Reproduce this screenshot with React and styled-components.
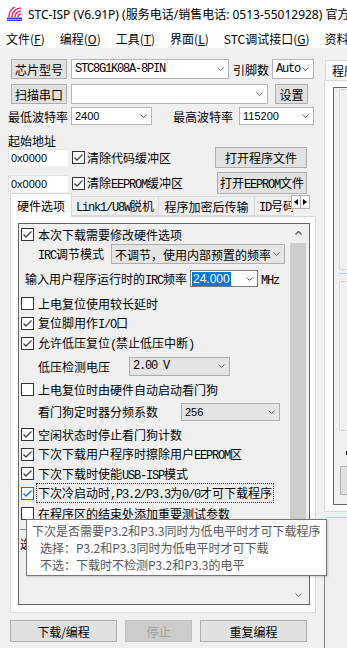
import React from 'react';
import styled, { createGlobalStyle } from 'styled-components';

const Global = createGlobalStyle`
  html, body { margin: 0; padding: 0; background: #f0f0f0; }
  body { font-family: "Noto Sans CJK SC", "Noto Sans", sans-serif; font-size: 12px; color: #000; }
  * { box-sizing: border-box; }
`;

const Window = styled.div`
  position: relative;
  width: 347px;
  height: 648px;
  overflow: hidden;
  background: #f0f0f0;
  display: flex;
  flex-direction: column;
`;

const TitleBar = styled.div`
  height: 28px;
  flex: none;
  background: #fff;
  display: flex;
  align-items: center;
  padding-left: 7px;
  gap: 5px;
  font-family: "Noto Sans", "Noto Sans CJK SC", sans-serif;
  font-size: 12px;
  white-space: nowrap;
`;

const MenuBar = styled.div`
  height: 20px;
  flex: none;
  background: #fff;
  display: flex;
  align-items: center;
  padding-left: 6px;
  gap: 15px;
  white-space: nowrap;
  font-size: 12px;
`;

const MenuItem = styled.span`
  u { text-decoration: underline; text-underline-offset: 1px; }
`;

const Body = styled.div`
  flex: 1;
  display: flex;
  min-height: 0;
`;

const LeftPane = styled.div`
  width: 318px;
  flex: none;
  padding: 11px 0 0 8px;
  display: flex;
  flex-direction: column;
`;

const Row = styled.div`
  display: flex;
  align-items: center;
  flex: none;
  height: ${p => p.$h || 20}px;
  margin-top: ${p => p.$mt || 0}px;
  margin-left: ${p => p.$ml || 0}px;
  padding-left: ${p => p.$pl || 0}px;
  gap: ${p => p.$gap ?? 4}px;
  width: ${p => (p.$w ? `${p.$w}px` : 'auto')};
  white-space: nowrap;
`;

const Button = styled.button`
  width: ${p => p.$w}px;
  height: ${p => p.$h || 20}px;
  flex: none;
  margin: 0;
  margin-left: ${p => (p.$auto ? 'auto' : `${p.$ml || 0}px`)};
  padding: 0;
  background: ${p => (p.$disabled ? '#cccccc' : '#e1e1e1')};
  border: 1px solid ${p => (p.$disabled ? '#bfbfbf' : '#adadad')};
  color: ${p => (p.$disabled ? '#a0a0a0' : '#000')};
  display: flex;
  align-items: center;
  justify-content: center;
  font-family: "Noto Sans CJK SC", sans-serif;
  font-size: 12px;
  white-space: nowrap;
`;

const Combo = styled.div`
  width: ${p => p.$w}px;
  height: ${p => p.$h || 20}px;
  flex: none;
  background: ${p => (p.$flat ? '#e5e5e5' : '#fff')};
  border: 1px solid ${p => (p.$flat ? '#adadad' : '#b4b4b4')};
  display: flex;
  align-items: center;
  justify-content: space-between;
  padding: 0 4px 0 3px;
  white-space: nowrap;
  overflow: hidden;
  svg { flex: none; }
`;

const Label = styled.span`
  flex: none;
  width: ${p => (p.$w ? `${p.$w}px` : 'auto')};
  margin-left: ${p => p.$ml || 0}px;
  font-size: 12px;
  white-space: nowrap;
`;

const M = styled.span`
  font-family: "Liberation Mono", monospace;
  font-size: 12px;
  letter-spacing: -1.2px;
`;

const Num = styled.span`
  font-family: "Liberation Sans", sans-serif;
  font-size: 11px;
`;

const TextInput = styled.div`
  width: 60px;
  height: 17px;
  flex: none;
  background: #fff;
  border-top: 1px solid #e3e3e3;
  border-left: 1px solid #e3e3e3;
  display: flex;
  align-items: center;
  padding-left: 2px;
`;

const AddrLabel = styled.div`
  height: 13px;
  margin-top: 9px;
  line-height: 13px;
  font-size: 12px;
  flex: none;
`;

const TabStrip = styled.div`
  display: flex;
  align-items: flex-end;
  height: 23px;
  margin-top: -1px;
  padding-left: 2px;
  flex: none;
  white-space: nowrap;
  position: relative;
`;

const Tab = styled.div`
  height: ${p => (p.$active ? 24 : 20)}px;
  margin-bottom: ${p => (p.$active ? -1 : 0)}px;
  position: relative;
  z-index: ${p => (p.$active ? 1 : 0)};
  background: ${p => (p.$active ? '#fff' : '#f0f0f0')};
  border: 1px solid #d9d9d9;
  border-bottom: ${p => (p.$active ? 'none' : '1px solid #d9d9d9')};
  margin-left: ${p => (p.$active ? 0 : -1)}px;
  width: ${p => p.$w}px;
  padding-left: ${p => p.$pl || 0}px;
  overflow: hidden;
  display: flex;
  align-items: center;
  justify-content: ${p => (p.$pl ? 'flex-start' : 'center')};
  font-size: 12px;
  flex: none;
`;

const TabScroll = styled.div`
  position: absolute;
  left: 283px;
  top: 2px;
  display: flex;
  z-index: 2;
`;

const ScrollBtn = styled.div`
  width: 10px;
  height: 14px;
  background: #fff;
  border: 1px solid #adadad;
  margin-left: ${p => (p.$second ? -1 : 0)}px;
  display: flex;
  align-items: center;
  justify-content: center;
`;

const TabPanel = styled.div`
  margin-left: 2px;
  width: 306px;
  height: 397px;
  flex: none;
  border: 1px solid #d9d9d9;
  background: #fff;
  padding: 6px 0 0 7px;
`;

const ListBox = styled.div`
  width: 292px;
  height: 382px;
  border: 1px solid #646464;
  background: #f0f0f0;
  display: flex;
`;

const ListContent = styled.div`
  flex: 1;
  min-width: 0;
  display: flex;
  flex-direction: column;
  overflow: hidden;
`;

const ScrollBar = styled.div`
  width: 19px;
  flex: none;
  display: flex;
  flex-direction: column;
  padding-right: 3px;
`;

const ScrollArrow = styled.div`
  height: 18px;
  display: flex;
  align-items: center;
  justify-content: center;
  flex: none;
`;

const Thumb = styled.div`
  height: 318px;
  margin-top: 1px;
  background: #cdcdcd;
  flex: none;
`;

const ItemRow = styled.div`
  height: ${p => p.$h || 20}px;
  flex: none;
  display: flex;
  align-items: center;
  padding-left: ${p => p.$pl ?? 2}px;
  gap: ${p => p.$gap ?? 4}px;
  white-space: nowrap;
  font-size: 12px;
`;

const Box = styled.span`
  width: 13px;
  height: 13px;
  flex: none;
  border: 1px solid ${p => (p.$focus ? '#0078d7' : '#333')};
  background: #fff;
  display: inline-flex;
  align-items: center;
  justify-content: center;
`;

const FocusText = styled.span`
  outline: 1px dotted #333;
  padding: 0 1px;
  margin-left: -1px;
`;

const Selected = styled.span`
  background: #0078d7;
  color: #fff;
  font-family: "Liberation Sans", sans-serif;
  font-size: 12px;
  line-height: 14px;
  padding: 0 1px;
`;

const GroupLine = styled.div`
  margin: 6px 0 0 1px;
  height: 30px;
  border-top: 1px solid #8c8c8c;
  padding-top: 5px;
  font-size: 12px;
  flex: none;
`;

const BottomRow = styled.div`
  display: flex;
  gap: 8px;
  margin-top: 7px;
  padding-left: 2px;
  flex: none;
`;

const RightPane = styled.div`
  flex: 1;
  min-width: 0;
  display: flex;
  flex-direction: column;
  padding-top: 12px;
  overflow: hidden;
`;

const RTab = styled.div`
  margin-left: 7px;
  width: 70px;
  height: 20px;
  flex: none;
  border: 1px solid #d9d9d9;
  border-bottom: none;
  background: #fff;
  padding-left: 6px;
  font-size: 12px;
  line-height: 19px;
  white-space: nowrap;
`;

const RPanel = styled.div`
  margin-left: 6px;
  width: 60px;
  height: 432px;
  flex: none;
  border-left: 1px solid #d9d9d9;
  border-top: 1px solid #d9d9d9;
  border-bottom: 1px solid #d9d9d9;
  background: #fff;
  padding: 6px 0 0 8px;
`;

const RFrame = styled.div`
  height: 418px;
  border: 1px solid #646464;
  border-right: none;
  background: #f0f0f0;
  padding: 1px 0 0 5px;
  display: flex;
  flex-direction: column;
`;

const RInner = styled.div`
  height: ${p => p.$h}px;
  margin-top: ${p => p.$mt || 0}px;
  border: 1px solid #dcdcdc;
  border-right: none;
  flex: none;
`;

const BlueLine = styled.div`
  height: 1px;
  margin-top: ${p => p.$mt || 0}px;
  margin-left: ${p => p.$ml || 0}px;
  background: #a6d8f4;
  flex: none;
`;

const RSmall = styled.div`
  width: 4px;
  height: 4px;
  margin: 20px 0 0 7px;
  background: #000;
  flex: none;
`;

const RButton = styled.div`
  width: 30px;
  height: 29px;
  margin: 11px 0 0 1px;
  background: #e1e1e1;
  border: 1px solid #adadad;
  flex: none;
`;

const LogBox = styled.div`
  flex: 1;
  margin: 2px 0 0 6px;
  border-left: 1px solid #828282;
  background: #f0f0f0;
`;

const Tooltip = styled.div`
  position: absolute;
  left: 26px;
  top: 519px;
  width: 301px;
  height: 57px;
  background: #fff;
  border: 1px solid #767676;
  box-shadow: 1px 1px 2px rgba(0, 0, 0, 0.18);
  padding: 2px 0 0 5px;
  color: #575757;
  font-size: 12px;
  line-height: 17px;
  white-space: nowrap;
  z-index: 10;
`;

const TipLine = styled.div`
  padding-left: ${p => p.$pl || 0}px;
`;

const Chevron = ({ up }) => (
  <svg width="7" height="4" viewBox="0 0 7 4">
    <polyline
      points={up ? '0.5,3.5 3.5,0.5 6.5,3.5' : '0.5,0.5 3.5,3.5 6.5,0.5'}
      fill="none"
      stroke={up ? '#606060' : '#6a6a6a'}
      strokeWidth={up ? 1.4 : 1}
    />
  </svg>
);

const Tri = ({ dir }) => (
  <svg width="4" height="6" viewBox="0 0 4 6">
    <polygon points={dir === 'left' ? '4,0 0,3 4,6' : '0,0 4,3 0,6'} fill="#000" />
  </svg>
);

const Check = ({ focus }) => (
  <svg width="11" height="11" viewBox="0 0 11 11">
    <polyline points="1.5,5.5 4,8 9.5,2.5" fill="none" stroke={focus ? '#0078d7' : '#444'} strokeWidth="1.3" />
  </svg>
);

const CheckBox = ({ checked, focus }) => <Box $focus={focus}>{checked && <Check focus={focus} />}</Box>;

const AppIcon = () => (
  <svg width="16" height="14" viewBox="0 0 16 14" style={{ flex: 'none' }}>
    {[3, 6, 9, 12].map(r => (
      <path key={r} d={`M ${14 - r} 10 A ${r} ${r} 0 0 1 14 ${10 - r}`} fill="none" stroke="#e8336a" strokeWidth="1.6" />
    ))}
    <rect x="0" y="10.5" width="15" height="1.6" fill="#2b46c8" />
    <rect x="0" y="12.6" width="15" height="1.4" fill="#2b46c8" />
  </svg>
);

const menus = [
  ['文件(', 'F', ')'],
  ['编程(', 'O', ')'],
  ['工具(', 'T', ')'],
  ['界面(', 'L', ')'],
  ['STC调试接口(', 'G', ')'],
  ['资料(', 'D', ')'],
];

export default function App() {
  return (
    <>
      <Global />
      <Window>
        <TitleBar>
          <AppIcon />
          <span>STC-ISP (V6.91P) (服务电话/销售电话: 0513-55012928) 官方网站</span>
        </TitleBar>
        <MenuBar>
          {menus.map(([a, k, b]) => (
            <MenuItem key={a}>
              {a}
              <u>{k}</u>
              {b}
            </MenuItem>
          ))}
        </MenuBar>
        <Body>
          <LeftPane>
            <Row $pl={3}>
              <Button $w={56}>芯片型号</Button>
              <Combo $w={158}>
                <M>STC8G1K08A-8PIN</M>
                <Chevron />
              </Combo>
              <Label $w={35}>引脚数</Label>
              <Combo $w={42}>
                <M>Auto</M>
                <Chevron />
              </Combo>
            </Row>
            <Row $pl={3} $mt={5}>
              <Button $w={56}>扫描串口</Button>
              <Combo $w={197}>
                <span />
                <Chevron />
              </Combo>
              <Button $w={33} $ml={3}>设置</Button>
            </Row>
            <Row $mt={3} $h={18} $gap={0}>
              <Label $w={63}>最低波特率</Label>
              <Combo $w={81} $h={18}>
                <Num>2400</Num>
                <Chevron />
              </Combo>
              <Label $w={66} $ml={21}>最高波特率</Label>
              <Combo $w={75} $h={18}>
                <Num>115200</Num>
                <Chevron />
              </Combo>
            </Row>
            <AddrLabel>起始地址</AddrLabel>
            <Row $h={21} $w={299} $gap={0}>
              <TextInput>
                <Num>0x0000</Num>
              </TextInput>
              <Row $gap={2} $ml={4}>
                <CheckBox checked />
                <span>清除代码缓冲区</span>
              </Row>
              <Button $w={92} $h={21} $auto>
                <span>打开程序文件</span>
              </Button>
            </Row>
            <Row $h={22} $w={299} $gap={0} $mt={4}>
              <TextInput>
                <Num>0x0000</Num>
              </TextInput>
              <Row $gap={2} $ml={4}>
                <CheckBox checked />
                <span>
                  清除<M>EEPROM</M>缓冲区
                </span>
              </Row>
              <Button $w={90} $h={22} $auto>
                <span>
                  打开<M>EEPROM</M>文件
                </span>
              </Button>
            </Row>
            <TabStrip>
              <Tab $active $w={62}>
                <span>硬件选项</span>
              </Tab>
              <Tab $w={88}>
                <span>
                  <M>Link1/U8W</M>脱机
                </span>
              </Tab>
              <Tab $w={97}>
                <span>程序加密后传输</span>
              </Tab>
              <Tab $w={40} $pl={4}>
                <span>
                  <M>ID</M>号码
                </span>
              </Tab>
              <TabScroll>
                <ScrollBtn>
                  <Tri dir="left" />
                </ScrollBtn>
                <ScrollBtn $second>
                  <Tri dir="right" />
                </ScrollBtn>
              </TabScroll>
            </TabStrip>
            <TabPanel>
              <ListBox>
                <ListContent>
                  <ItemRow>
                    <CheckBox checked />
                    <span>本次下载需要修改硬件选项</span>
                  </ItemRow>
                  <ItemRow $pl={19} $gap={0}>
                    <Label $w={73}>
                      <M>IRC</M>调节模式
                    </Label>
                    <Combo $w={174} $h={20} $flat>
                      <span>不调节，使用内部预置的频率</span>
                      <Chevron />
                    </Combo>
                  </ItemRow>
                  <ItemRow $pl={6} $gap={0} $h={29}>
                    <Label $w={165}>
                      输入用户程序运行时的<M>IRC</M>频率
                    </Label>
                    <Combo $w={68} $h={17} style={{ borderColor: '#7a7a7a', paddingLeft: 1 }}>
                      <Selected>24.000</Selected>
                      <Chevron />
                    </Combo>
                    <Label $ml={3}>
                      <M>MHz</M>
                    </Label>
                  </ItemRow>
                  <ItemRow>
                    <CheckBox />
                    <span>上电复位使用较长延时</span>
                  </ItemRow>
                  <ItemRow>
                    <CheckBox checked />
                    <span>
                      复位脚用作<M>I/O</M>口
                    </span>
                  </ItemRow>
                  <ItemRow>
                    <CheckBox checked />
                    <span>
                      允许低压复位<M>(</M>禁止低压中断<M>)</M>
                    </span>
                  </ItemRow>
                  <ItemRow $pl={19} $gap={0} $h={26}>
                    <Label $w={91}>低压检测电压</Label>
                    <Combo $w={101} $h={19} $flat>
                      <M>2.00 V</M>
                      <Chevron />
                    </Combo>
                  </ItemRow>
                  <ItemRow>
                    <CheckBox />
                    <span>上电复位时由硬件自动启动看门狗</span>
                  </ItemRow>
                  <ItemRow $pl={19} $gap={0} $h={25}>
                    <Label $w={143}>看门狗定时器分频系数</Label>
                    <Combo $w={99} $h={18} $flat>
                      <Num>256</Num>
                      <Chevron />
                    </Combo>
                  </ItemRow>
                  <ItemRow>
                    <CheckBox checked />
                    <span>空闲状态时停止看门狗计数</span>
                  </ItemRow>
                  <ItemRow>
                    <CheckBox checked />
                    <span>
                      下次下载用户程序时擦除用户<M>EEPROM</M>区
                    </span>
                  </ItemRow>
                  <ItemRow $h={19}>
                    <CheckBox checked />
                    <span>
                      下次下载时使能<M>USB-ISP</M>模式
                    </span>
                  </ItemRow>
                  <ItemRow>
                    <CheckBox checked focus />
                    <FocusText>
                      下次冷启动时<M>,P3.2/P3.3</M>为<M>0/0</M>才可下载程序
                    </FocusText>
                  </ItemRow>
                  <ItemRow>
                    <CheckBox />
                    <span>在程序区的结束处添加重要测试参数</span>
                  </ItemRow>
                  <GroupLine>选项</GroupLine>
                </ListContent>
                <ScrollBar>
                  <ScrollArrow>
                    <Chevron up />
                  </ScrollArrow>
                  <Thumb />
                  <div style={{ flex: 1 }} />
                  <ScrollArrow>
                    <Chevron />
                  </ScrollArrow>
                </ScrollBar>
              </ListBox>
            </TabPanel>
            <BottomRow>
              <Button $w={107} $h={22}>下载/编程</Button>
              <Button $w={67} $h={22} $disabled>停止</Button>
              <Button $w={107} $h={22}>重复编程</Button>
            </BottomRow>
          </LeftPane>
          <RightPane>
            <RTab>程序文件</RTab>
            <RPanel>
              <RFrame>
                <RInner $h={181} />
                <BlueLine $mt={3} />
                <RInner $h={150} $mt={7} />
                <RSmall />
                <RButton />
              </RFrame>
            </RPanel>
            <BlueLine $mt={5} $ml={7} />
            <LogBox />
          </RightPane>
        </Body>
        <Tooltip>
          <TipLine>下次是否需要P3.2和P3.3同时为低电平时才可下载程序</TipLine>
          <TipLine $pl={8}>选择：P3.2和P3.3同时为低电平时才可下载</TipLine>
          <TipLine $pl={8}>不选：下载时不检测P3.2和P3.3的电平</TipLine>
        </Tooltip>
      </Window>
    </>
  );
}
